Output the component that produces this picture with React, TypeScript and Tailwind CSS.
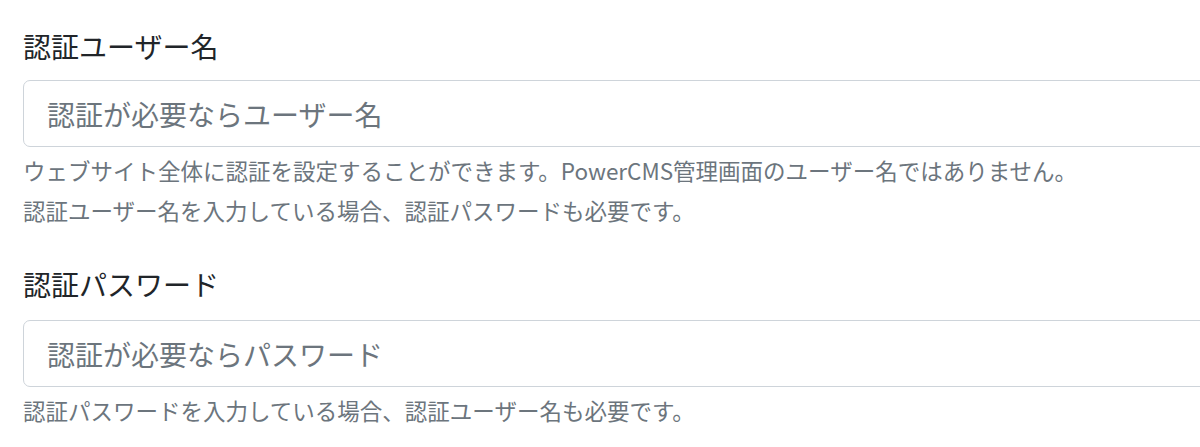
export default function App() {
  const font = "font-['Noto_Sans_CJK_JP','Noto_Sans',sans-serif]";

  return (
    <div className={`w-[1200px] h-[447px] overflow-hidden bg-white ${font}`}>
      <div className="pl-[23px] pt-[25px] w-[1240px]">
        {/* Basic auth user */}
        <div className="flex flex-col">
          <label className="text-[28px] leading-[42px] text-[#212529]">認証ユーザー名</label>
          <input
            type="text"
            placeholder="認証が必要ならユーザー名"
            className="mt-[13px] h-[67px] w-[1200px] rounded-[7px] border border-[#ced4da] bg-white px-[23px] text-[28px] text-[#495057] placeholder:text-[#6c757d] outline-none"
          />
          <small className="mt-[7px] text-[22.5px] leading-[33px] text-[#6c757d]">
            ウェブサイト全体に認証を設定することができます。PowerCMS管理画面のユーザー名ではありません。
          </small>
          <small className="mt-[7px] text-[22.5px] leading-[33px] text-[#6c757d]">
            認証ユーザー名を入力している場合、認証パスワードも必要です。
          </small>
        </div>

        {/* Basic auth password */}
        <div className="flex flex-col mt-[36px]">
          <label className="text-[28px] leading-[42px] text-[#212529]">認証パスワード</label>
          <input
            type="password"
            placeholder="認証が必要ならパスワード"
            className="mt-[15px] h-[67px] w-[1200px] rounded-[7px] border border-[#ced4da] bg-white px-[23px] text-[28px] text-[#495057] placeholder:text-[#6c757d] outline-none"
          />
          <small className="mt-[7px] text-[22.5px] leading-[33px] text-[#6c757d]">
            認証パスワードを入力している場合、認証ユーザー名も必要です。
          </small>
        </div>
      </div>
    </div>
  );
}
